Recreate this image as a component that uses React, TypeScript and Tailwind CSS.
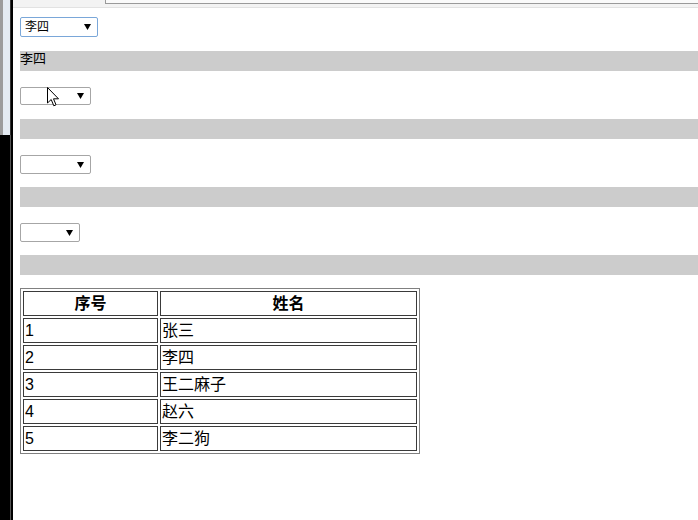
import React from "react";

const Select = ({ w, h, text, focused }: { w: number; h: number; text?: string; focused?: boolean }) => (
  <div
    className={`flex items-center justify-between rounded-[2px] border bg-white pl-[4px] pr-[6px] ${
      focused ? "border-[#7aa7d9]" : "border-[#a6a6a6]"
    }`}
    style={{ width: w, height: h }}
  >
    <span className="text-[12px] leading-none text-black">{text ?? ""}</span>
    <svg width="7" height="6" viewBox="0 0 7 6">
      <path d="M0 0 L7 0 L3.5 6 Z" fill="#000" />
    </svg>
  </div>
);

const Bar = ({ children }: { children?: React.ReactNode }) => (
  <div className="mt-[14px] h-[20px] bg-[#cccccc] text-[13px] leading-[16px] text-black">{children}</div>
);

const rows = [
  ["1", "张三"],
  ["2", "李四"],
  ["3", "王二麻子"],
  ["4", "赵六"],
  ["5", "李二狗"],
];

export default function App() {
  return (
    <div
      className="relative flex h-[520px] w-[698px] overflow-hidden bg-white"
      style={{ fontFamily: '"Liberation Sans", "Noto Sans CJK SC", sans-serif' }}
    >
      {/* left window edge */}
      <div className="flex h-full w-[13px] shrink-0 flex-col bg-black">
        <div className="flex h-[135px] w-[11px]">
          <div className="h-full w-[3px] bg-[#9c9c9c]" />
          <div className="h-full w-[7px] bg-[#e4ebf2]" />
          <div className="h-full w-px bg-[#333]" />
        </div>
        <div className="flex flex-1">
          <div className="h-full w-[10px] bg-black" />
          <div className="h-full w-px bg-[#555]" />
          <div className="h-full w-[2px] bg-black" />
        </div>
      </div>

      <div className="flex min-w-0 flex-1 flex-col">
        {/* top strip */}
        <div className="relative h-[8px] bg-[#f3f3f3]">
          <div className="absolute left-[92px] top-0 h-[4px] right-0 border-b border-l border-[#9a9a9a] bg-[#fafafa]" />
          <div className="absolute bottom-0 left-0 right-0 h-px bg-[#e2e2e2]" />
        </div>

        <div className="flex flex-col pl-[7px]">
          <div className="mt-[9px]">
            <Select w={78} h={20} text="李四" focused />
          </div>
          <Bar>李四</Bar>
          <div className="mt-[16px]">
            <Select w={71} h={18} />
          </div>
          <Bar />
          <div className="mt-[16px]">
            <Select w={71} h={19} />
          </div>
          <div className="mt-[13px] h-[20px] bg-[#cccccc]" />
          <div className="mt-[16px]">
            <Select w={60} h={19} />
          </div>
          <div className="mt-[13px] h-[20px] bg-[#cccccc]" />

          <table className="mt-[13px] w-[400px] table-fixed border-separate border-spacing-[2px] border border-[#808080] text-[16px] text-black">
            <thead>
              <tr>
                <th className="h-[25px] w-[135px] border border-[#3a3a3a] p-px text-center font-bold leading-[21px]">序号</th>
                <th className="h-[25px] border border-[#3a3a3a] p-px text-center font-bold leading-[21px]">姓名</th>
              </tr>
            </thead>
            <tbody>
              {rows.map(([n, name]) => (
                <tr key={n}>
                  <td className="h-[25px] border border-[#3a3a3a] p-px leading-[21px]">{n}</td>
                  <td className="h-[25px] border border-[#3a3a3a] p-px leading-[21px]">{name}</td>
                </tr>
              ))}
            </tbody>
          </table>
        </div>
      </div>

      {/* mouse cursor */}
      <svg className="absolute left-[47px] top-[87px]" width="13" height="20" viewBox="0 0 13 20">
        <path
          d="M0.5 0.5 L0.5 16 L4.2 12.5 L6.8 18.8 L9 17.8 L6.5 11.8 L11.5 11.8 Z"
          fill="#fff"
          stroke="#000"
          strokeWidth="1"
          strokeLinejoin="miter"
        />
      </svg>
    </div>
  );
}
